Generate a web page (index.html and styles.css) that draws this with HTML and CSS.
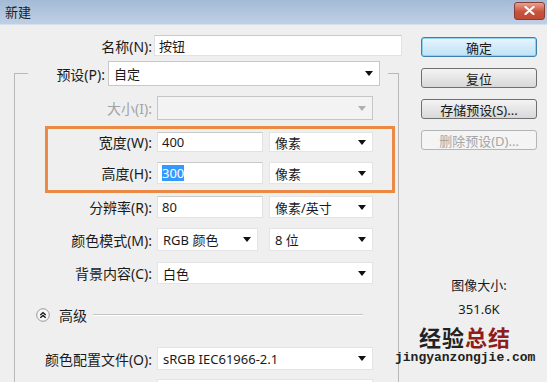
FILE: index.html
```html
<!DOCTYPE html>
<html lang="zh-CN">
<head>
	<meta charset="UTF-8">
	<title>新建</title>
	<link rel="stylesheet" href="styles.css">
</head>
<body>
	<div class="dialog">
		<div class="titlebar">
			<span class="title">新建</span>
			<span class="close">
				<svg width="11" height="9" viewBox="0 0 11 9"><path d="M1.5 1 L9.5 8 M9.5 1 L1.5 8" stroke="#fff" stroke-width="2.2" stroke-linecap="round"/></svg>
			</span>
		</div>
		<div class="main">
			<div class="left">
				<div class="row name-row">
					<label class="label">名称(N):</label>
					<div class="field name-field">按钮</div>
				</div>
				<fieldset class="group">
					<legend class="legend">
						<label class="label preset-label">预设(P):</label>
						<div class="select preset-select"><span>自定</span><i class="arrow"></i></div>
					</legend>
					<div class="row size-row">
						<label class="label disabled">大小(I):</label>
						<div class="select wide off"><span></span><i class="arrow"></i></div>
					</div>
					<div class="highlight">
						<div class="row w-row">
							<label class="label">宽度(W):</label>
							<div class="field num">400</div>
							<div class="select unit"><span>像素</span><i class="arrow"></i></div>
						</div>
						<div class="row h-row">
							<label class="label">高度(H):</label>
							<div class="field num"><span class="sel">300</span></div>
							<div class="select unit"><span>像素</span><i class="arrow"></i></div>
						</div>
					</div>
					<div class="row res-row">
						<label class="label">分辨率(R):</label>
						<div class="field num">80</div>
						<div class="select unit"><span>像素/英寸</span><i class="arrow"></i></div>
					</div>
					<div class="row mode-row">
						<label class="label">颜色模式(M):</label>
						<div class="select mode"><span>RGB 颜色</span><i class="arrow"></i></div>
						<div class="select unit"><span>8 位</span><i class="arrow"></i></div>
					</div>
					<div class="row bg-row">
						<label class="label">背景内容(C):</label>
						<div class="select wide"><span>白色</span><i class="arrow"></i></div>
					</div>
					<div class="advanced">
						<svg class="adv-icon" width="14" height="14" viewBox="0 0 14 14">
							<circle cx="7" cy="7" r="6.3" fill="#f6f6f6" stroke="#9a9a9a"/>
							<path d="M4.3 7 L7 4.6 L9.7 7 M4.3 9.8 L7 7.4 L9.7 9.8" fill="none" stroke="#111" stroke-width="1.3"/>
						</svg>
						<span class="adv-text">高级</span>
						<span class="adv-line"></span>
					</div>
					<div class="row profile-row">
						<label class="label">颜色配置文件(O):</label>
						<div class="select wide"><span>sRGB IEC61966-2.1</span><i class="arrow"></i></div>
					</div>
					<div class="row last-row">
						<label class="label"></label>
						<div class="select wide"><span></span></div>
					</div>
				</fieldset>
			</div>
			<div class="right">
				<div class="btn default">确定</div>
				<div class="btn">复位</div>
				<div class="btn">存储预设(S)...</div>
				<div class="btn off">删除预设(D)...</div>
				<div class="info">图像大小:</div>
				<div class="info size">351.6K</div>
				<div class="mark"><b>经验</b><b class="red">总结</b></div>
				<div class="mark-url">jingyanzongjie.com</div>
			</div>
		</div>
	</div>
</body>
</html>
```
FILE: styles.css
```css
*{
	padding: 0;
	margin: 0;
	box-sizing: border-box;
}
body{
	background: #efefef;
	font-family: "Noto Sans", "Noto Sans CJK SC", sans-serif;
	font-size: 13px;
	color: #1a1a1a;
}
.dialog{
	width: 547px;
	height: 382px;
	overflow: hidden;
	background: #efefef;
}
.titlebar{
	height: 25px;
	display: flex;
	align-items: center;
	justify-content: space-between;
	padding: 0 2px 0 5px;
	background: linear-gradient(#a3bad6, #bfd0e5);
	border-bottom: 1px solid #d6e0ec;
}
.title{
	font-size: 13px;
	color: #1e1e1e;
	margin-top: -2px;
}
.close{
	width: 31px;
	height: 18px;
	margin-top: -3px;
	border: 1px solid #8a3d33;
	border-radius: 3px;
	background: linear-gradient(#e8a293, #c8523d 55%, #c14a35);
	display: flex;
	align-items: center;
	justify-content: center;
}
.main{
	display: flex;
}
.left{
	width: 410px;
	flex: none;
}
.row{
	display: flex;
	align-items: center;
}
.label{
	width: 129px;
	text-align: right;
	padding-right: 5px;
	flex: none;
	white-space: nowrap;
	font-size: 14px;
}
.label.disabled{
	color: #a3a3a3;
}
.name-row{
	margin-top: 10px;
	height: 21px;
}
.name-row .label{
	width: 154px;
	padding-right: 2px;
}
.field{
	height: 100%;
	background: #fff;
	border: 1px solid #e2e2e2;
	border-top-color: #c9c9c9;
	padding-left: 4px;
	display: flex;
	align-items: center;
	white-space: nowrap;
}
.name-field{
	width: 248px;
}
.group{
	margin: 5px 0 0 14px;
	width: 385px;
	border: 1px solid #b9b9b9;
	padding: 0 0 0 13px;
	min-inline-size: 0;
}
.legend{
	width: 360px;
	height: 25px;
	display: flex;
	align-items: center;
	padding: 0 8px 0 0;
}
.preset-label{
	width: 80px;
	padding-right: 3px;
}
.select{
	height: 100%;
	background: #fff;
	border: 1px solid #e4e4e4;
	display: flex;
	align-items: center;
	justify-content: space-between;
	padding: 0 6px 0 5px;
	white-space: nowrap;
}
.arrow{
	width: 0;
	height: 0;
	border-left: 4px solid transparent;
	border-right: 4px solid transparent;
	border-top: 5px solid #111;
}
.preset-select{
	width: 272px;
	border-color: #c8c8c8;
}
.wide{
	width: 216px;
}
.select.off{
	background: #f3f3f3;
	border-color: #c6c6c6;
}
.select.off .arrow{
	border-top-color: #b0b0b0;
}
.size-row{
	margin-top: 10px;
	height: 24px;
}
.highlight{
	margin: 6px 0 0 17px;
	width: 350px;
	border: 3px solid #ea8a45;
	padding: 3px 0 6px;
}
.highlight .label{
	width: 109px;
}
.num{
	width: 106px;
	margin-right: 6px;
}
.unit{
	width: 104px;
}
.w-row{
	height: 20px;
	margin-bottom: 10px;
}
.h-row{
	height: 22px;
}
.sel{
	background: #3399ff;
	color: #fff;
	line-height: 16px;
}
.res-row{
	margin-top: 3px;
	height: 22px;
}
.mode-row{
	margin-top: 10px;
	height: 23px;
}
.mode{
	width: 101px;
	margin-right: 11px;
}
.bg-row{
	margin-top: 11px;
	height: 22px;
}
.advanced{
	margin-top: 23px;
	height: 16px;
	display: flex;
	align-items: center;
	padding-left: 8px;
}
.adv-text{
	margin-left: 9px;
	font-size: 14px;
}
.adv-line{
	margin-left: 6px;
	width: 270px;
	height: 2px;
	border-top: 1px solid #c4c4c4;
	border-bottom: 1px solid #fff;
}
.profile-row{
	margin-top: 24px;
	height: 23px;
}
.last-row{
	margin-top: 9px;
	height: 23px;
}
.right{
	padding: 12px 0 0 11px;
	display: flex;
	flex-direction: column;
}
.btn{
	width: 116px;
	height: 20px;
	margin-bottom: 11px;
	border: 1px solid #707070;
	border-radius: 3px;
	background: linear-gradient(#f4f4f4, #e6e6e6 50%, #d8d8d8);
	display: flex;
	align-items: center;
	justify-content: center;
	font-size: 13px;
	white-space: nowrap;
}
.btn.default{
	border-color: #3c7fb1;
	background: linear-gradient(#eaf6fd, #d2ebf9 50%, #bfe3f6);
	box-shadow: inset 0 0 0 1px #8fd2f0;
}
.btn.off{
	border-color: #b2b6b8;
	background: #f4f4f4;
	color: #a6a6a6;
}
.info{
	margin-top: 116px;
	width: 116px;
	text-align: center;
	line-height: 16px;
}
.info.size{
	margin-top: 8px;
}
.mark{
	margin: 8px 0 0 -2px;
	font-size: 22px;
	line-height: 24px;
	letter-spacing: 1px;
	color: #222;
}
.mark .red{
	color: #8e1d1d;
}
.mark-url{
	margin: 2px 0 0 -26px;
	font-family: "Liberation Mono", monospace;
	font-weight: bold;
	font-size: 13px;
	line-height: 14px;
	color: #222;
}
```
